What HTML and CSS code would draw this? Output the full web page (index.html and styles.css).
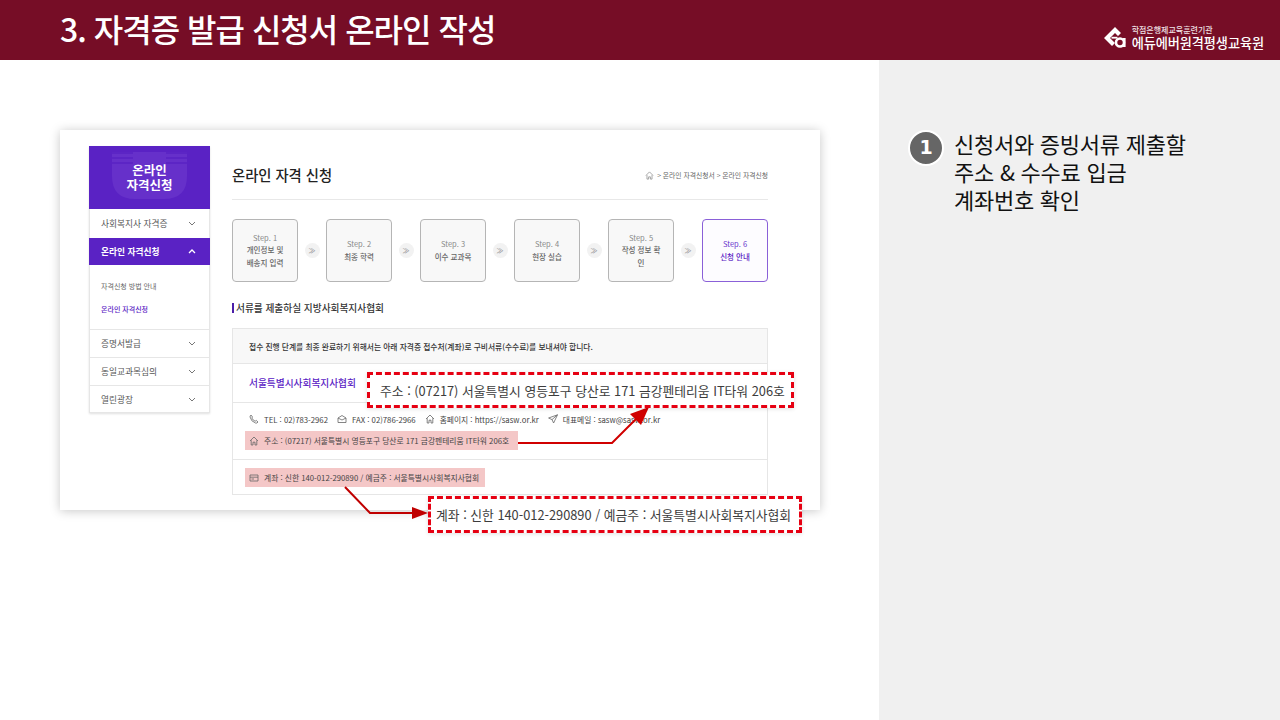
FILE: index.html
```html
<!DOCTYPE html>
<html lang="ko">
<head>
<meta charset="utf-8">
<title>자격증 발급 신청서 온라인 작성</title>
<link rel="stylesheet" href="styles.css">
</head>
<body>
<header class="topbar">
  <h1 class="slide-title">3. 자격증 발급 신청서 온라인 작성</h1>
  <div class="brand">
    <svg class="brand-mark" viewBox="0 0 24 24" width="24" height="24" aria-hidden="true">
      <path d="M12 1 L1 12 L9 20 L12 17 L7 12 L12 7 L15 10 L18 7 Z" fill="#fff"/>
      <rect x="8.5" y="10.8" width="6" height="1.8" fill="#fff"/>
      <circle cx="17" cy="16.5" r="4" fill="none" stroke="#fff" stroke-width="2.6"/>
      <rect x="20" y="12" width="2.6" height="9" fill="#fff"/>
    </svg>
    <div class="brand-text">
      <span class="brand-sub">학점은행제교육훈련기관</span>
      <span class="brand-name">에듀에버원격평생교육원</span>
    </div>
  </div>
</header>

<main class="stage">
  <section class="slide">
    <div class="shot">
      <nav class="side">
        <div class="side-hero">
          <svg class="hero-art" viewBox="0 0 121 62" width="121" height="62" aria-hidden="true">
            <path d="M23 6 H98 V30 Q98 53 75 53 H46 Q23 53 23 30 Z" fill="#6630ca"/>
            <path d="M23 7 H44 M23 12 H44 M23 17 H44 M77 7 H98 M77 12 H98 M77 17 H98" stroke="#5a22c4" stroke-width="1.6"/>
          </svg>
          <span class="hero-text">온라인<br>자격신청</span>
        </div>
        <div class="side-row side-first">사회복지사 자격증<svg class="chev" viewBox="0 0 8 5" width="8" height="5"><path d="M1 1 L4 4 L7 1" fill="none" stroke="#777" stroke-width="1"/></svg></div>
        <div class="side-row side-active">온라인 자격신청<svg class="chev" viewBox="0 0 8 5" width="8" height="5"><path d="M1 4 L4 1 L7 4" fill="none" stroke="#fff" stroke-width="1.3"/></svg></div>
        <div class="side-sub">
          <span>자격신청 방법 안내</span>
          <span class="side-sub-on">온라인 자격신청</span>
        </div>
        <div class="side-row side-line">증명서발급<svg class="chev" viewBox="0 0 8 5" width="8" height="5"><path d="M1 1 L4 4 L7 1" fill="none" stroke="#777" stroke-width="1"/></svg></div>
        <div class="side-row side-line">동일교과목심의<svg class="chev" viewBox="0 0 8 5" width="8" height="5"><path d="M1 1 L4 4 L7 1" fill="none" stroke="#777" stroke-width="1"/></svg></div>
        <div class="side-row side-line">열린광장<svg class="chev" viewBox="0 0 8 5" width="8" height="5"><path d="M1 1 L4 4 L7 1" fill="none" stroke="#777" stroke-width="1"/></svg></div>
      </nav>

      <div class="content">
        <div class="page-head">
          <h2 class="page-title">온라인 자격 신청</h2>
          <div class="crumbs">
            <svg viewBox="0 0 10 10" width="9" height="9" aria-hidden="true"><path d="M1 5 L5 1 L9 5 M2.2 4.5 V9 H4 V6.5 H6 V9 H7.8 V4.5" fill="none" stroke="#888" stroke-width=".8"/></svg>
            <span>&gt; 온라인 자격신청서 &gt; 온라인 자격신청</span>
          </div>
        </div>

        <ol class="steps">
          <li class="step"><b>Step. 1</b><span>개인정보 및<br>배송지 입력</span></li>
          <li class="step-gap"><i>≫</i></li>
          <li class="step"><b>Step. 2</b><span>최종 학력</span></li>
          <li class="step-gap"><i>≫</i></li>
          <li class="step"><b>Step. 3</b><span>이수 교과목</span></li>
          <li class="step-gap"><i>≫</i></li>
          <li class="step"><b>Step. 4</b><span>현장 실습</span></li>
          <li class="step-gap"><i>≫</i></li>
          <li class="step"><b>Step. 5</b><span>작성 정보 확<br>인</span></li>
          <li class="step-gap"><i>≫</i></li>
          <li class="step step-on"><b>Step. 6</b><span>신청 안내</span></li>
        </ol>

        <h3 class="sec-title">서류를 제출하실 지방사회복지사협회</h3>

        <div class="info">
          <p class="info-note">접수 진행 단계를 최종 완료하기 위해서는 아래 자격증 접수처(계좌)로 구비서류(수수료)를 보내셔야 합니다.</p>
          <div class="info-name">서울특별시사회복지사협회</div>
          <div class="info-contact">
            <div class="contact-line">
              <span class="ci">
                <svg viewBox="0 0 10 10" width="10" height="10"><path d="M2 1 L3.5 3 L2.8 4 Q4 6.5 6.2 7.2 L7.2 6.4 L9 8 Q8 9.5 6.5 9 Q2 7.5 1 3 Q1 1.6 2 1 Z" fill="none" stroke="#666" stroke-width=".8"/></svg>
                TEL : 02)783-2962</span>
              <span class="ci">
                <svg viewBox="0 0 10 10" width="10" height="10"><path d="M1 4 L5 1.5 L9 4 V8.5 H1 Z M1 4 L5 6 L9 4" fill="none" stroke="#666" stroke-width=".8"/></svg>
                FAX : 02)786-2966</span>
              <span class="ci">
                <svg viewBox="0 0 10 10" width="10" height="10"><path d="M1 5 L5 1 L9 5 M2.2 4.2 V9 H4 V6.2 H6 V9 H7.8 V4.2" fill="none" stroke="#666" stroke-width=".8"/></svg>
                홈페이지 : https://sasw.or.kr</span>
              <span class="ci">
                <svg viewBox="0 0 10 10" width="10" height="10"><path d="M9.5 .8 L.6 4 L4 5.6 L5.6 9 Z M4 5.6 L9.5 .8" fill="none" stroke="#666" stroke-width=".8"/></svg>
                대표메일 : sasw@sasw.or.kr</span>
            </div>
            <div class="mark mark-addr">
              <svg viewBox="0 0 10 10" width="10" height="10"><path d="M1 5 L5 1 L9 5 M2.2 4.2 V9 H4 V6.2 H6 V9 H7.8 V4.2" fill="none" stroke="#666" stroke-width=".8"/></svg>
              주소 : (07217) 서울특별시 영등포구 당산로 171 금강펜테리움 IT타워 206호
            </div>
          </div>
          <div class="info-bank">
            <div class="mark mark-bank">
              <svg viewBox="0 0 10 10" width="10" height="10"><path d="M1 2 H9 V8 H1 Z M1 4.2 H9 M2.5 6 H5" fill="none" stroke="#666" stroke-width=".8"/></svg>
              계좌 : 신한 140-012-290890 / 예금주 : 서울특별시사회복지사협회
            </div>
          </div>
        </div>
      </div>
    </div>

    <svg class="arrows" viewBox="0 0 879 660" width="879" height="660" aria-hidden="true">
      <path d="M518 383 H612 L640 355" fill="none" stroke="#d00000" stroke-width="2"/>
      <path d="M649 347 L630 354 L641 365 Z" fill="#d00000"/>
      <path d="M345 427 L370 453 H416" fill="none" stroke="#c00000" stroke-width="2"/>
      <path d="M428 453 L412 447 V459 Z" fill="#c00000"/>
    </svg>
    <div class="callout callout-addr">주소 : (07217) 서울특별시 영등포구 당산로 171 금강펜테리움 IT타워 206호</div>
    <div class="callout callout-bank">계좌 : 신한 140-012-290890 / 예금주 : 서울특별시사회복지사협회</div>
  </section>

  <aside class="notes">
    <span class="badge">1</span>
    <p class="note-text">신청서와 증빙서류 제출할<br>주소 &amp; 수수료 입금<br>계좌번호 확인</p>
  </aside>
</main>
</body>
</html>
```

FILE: styles.css
```css
* { box-sizing: border-box; }
html, body { margin: 0; padding: 0; }
body {
  width: 1280px;
  height: 720px;
  overflow: hidden;
  background: #fff;
  font-family: "Noto Sans CJK KR", "Noto Sans", sans-serif;
  color: #333;
}
h1, h2, h3, p, ol { margin: 0; padding: 0; }
ol { list-style: none; }

.topbar {
  height: 60px;
  background: #760d26;
  display: flex;
  align-items: center;
  justify-content: space-between;
  padding: 0 16px 0 60px;
}
.slide-title {
  font-size: 32px;
  font-weight: 500;
  color: #fff;
  letter-spacing: -1px;
  line-height: 56px;
  height: 60px;
}
.brand {
  display: flex;
  align-items: center;
  gap: 5px;
  padding-top: 15px;
  color: #fff;
}
.brand-mark { margin-left: -3px; }
.brand-text { display: flex; flex-direction: column; }
.brand-sub { font-size: 8px; line-height: 10px; font-weight: 500; color: #efe0e4; }
.brand-name { font-size: 13.2px; line-height: 15px; font-weight: 500; letter-spacing: -0.1px; }

.stage { display: flex; height: 660px; }
.slide { position: relative; width: 879px; padding: 70px 0 0 60px; }
.notes {
  width: 401px;
  background: #f0f0f0;
  display: flex;
  align-items: flex-start;
  gap: 10px;
  padding: 70px 0 0 29px;
}

.shot {
  width: 760px;
  height: 380px;
  background: #fff;
  box-shadow: 0 1px 10px rgba(0, 0, 0, .22);
  display: flex;
  padding: 16px 0 0 29px;
  gap: 22px;
  overflow: hidden;
}

.side {
  width: 121px;
  height: 267px;
  border: 1px solid #e6e6e6;
  border-top: 0;
  box-shadow: 0 1px 2px rgba(0, 0, 0, .12);
  font-size: 8.7px;
  color: #555;
  flex: none;
}
.side-hero {
  position: relative;
  height: 63px;
  margin: 0 -1px;
  background: #5a22c4;
  display: flex;
  align-items: center;
  justify-content: center;
}
.hero-art { position: absolute; left: 0; top: 0; }
.hero-text {
  position: relative;
  color: #fff;
  font-size: 12.5px;
  font-weight: 700;
  line-height: 15px;
  text-align: center;
  margin-top: -2px;
}
.side-row {
  height: 28px;
  display: flex;
  align-items: center;
  justify-content: space-between;
  padding: 0 13px 0 11px;
}
.side-first { height: 29px; }
.side-line { border-top: 1px solid #e6e6e6; }
.side-active {
  height: 27px;
  margin: 0 -1px;
  padding: 0 14px 0 12px;
  background: #5a22c4;
  color: #fff;
  font-weight: 700;
}
.side-sub {
  height: 64px;
  display: flex;
  flex-direction: column;
  gap: 13px;
  padding: 16px 11px 0;
  font-size: 7px;
  line-height: 10px;
  color: #666;
}
.side-sub-on { color: #5a22c4; font-weight: 500; }

.content { width: 536px; flex: none; }
.page-head {
  height: 54px;
  border-bottom: 1px solid #e8e8e8;
  display: flex;
  justify-content: space-between;
  align-items: center;
  padding-top: 5px;
}
.page-title { font-size: 14.3px; font-weight: 500; color: #222; line-height: 20px; }
.crumbs { display: flex; align-items: center; gap: 3px; font-size: 6.8px; color: #666; }

.steps { display: flex; margin-top: 19px; }
.step {
  width: 66px;
  height: 63px;
  border: 1px solid #b5b5b5;
  border-radius: 4px;
  background: #f8f8f8;
  display: flex;
  flex-direction: column;
  align-items: center;
  justify-content: center;
  text-align: center;
  font-size: 7.5px;
  line-height: 12.5px;
  color: #666;
  flex: none;
}
.step b { font-weight: 400; color: #888; }
.step span { font-weight: 500; }
.step-on { border-color: #8a60d8; background: #fdfcff; color: #5a22c4; }
.step-on b { color: #6a35cc; }
.step-gap {
  width: 28px;
  flex: none;
  display: flex;
  align-items: center;
  justify-content: center;
}
.step-gap i {
  width: 15px;
  height: 15px;
  border-radius: 50%;
  background: #f2f2f2;
  color: #888;
  font-style: normal;
  font-size: 7px;
  line-height: 15px;
  text-align: center;
}

.sec-title {
  margin-top: 21px;
  border-left: 2px solid #4b1fa8;
  padding-left: 2px;
  font-size: 9.7px;
  font-weight: 500;
  line-height: 10px;
  color: #333;
}

.info {
  margin-top: 15px;
  border: 1px solid #e6e6e6;
  height: 167px;
  font-size: 7.75px;
  color: #444;
}
.info-note {
  height: 35px;
  background: #f8f8f8;
  border-bottom: 1px solid #e6e6e6;
  padding-left: 16px;
  font-weight: 500;
  font-size: 7.75px;
  line-height: 35px;
  color: #333;
}
.info-name {
  height: 39px;
  border-bottom: 1px solid #e6e6e6;
  padding-left: 16px;
  color: #5a22c4;
  font-size: 9.7px;
  font-weight: 500;
  line-height: 38px;
}
.info-contact {
  height: 57px;
  border-bottom: 1px solid #e6e6e6;
  padding: 7px 0 0 16px;
}
.contact-line { display: flex; gap: 9px; height: 18px; align-items: center; }
.ci { display: inline-flex; align-items: center; gap: 5px; }
.mark {
  display: flex;
  align-items: center;
  gap: 5px;
  height: 19px;
  padding-left: 4px;
  margin-left: -4px;
  background: #f4c7c7;
  color: #444;
}
.mark-addr { width: 273px; margin-top: 3px; }
.info-bank { padding: 8px 0 0 16px; }
.mark-bank { width: 240px; }

.arrows { position: absolute; left: 0; top: 0; pointer-events: none; }
.callout {
  position: absolute;
  background: #fff;
  border: 3px dashed #e60012;
  box-shadow: 0 1px 4px rgba(0, 0, 0, .12);
  color: #3c3c3c;
  font-size: 12.8px;
  white-space: nowrap;
  display: flex;
  align-items: center;
}
.callout-addr { left: 367px; top: 312px; width: 427px; height: 36px; padding-left: 10px; }
.callout-bank { left: 428px; top: 436px; width: 374px; height: 37px; padding-left: 5px; }

.badge {
  width: 36px;
  height: 36px;
  border-radius: 50%;
  background: #666;
  border: 2px solid #fff;
  color: #fff;
  font-family: "DejaVu Sans", sans-serif;
  font-size: 19px;
  font-weight: 700;
  line-height: 31px;
  text-align: center;
  flex: none;
}
.note-text {
  font-size: 22px;
  line-height: 28px;
  color: #111;
  margin-top: -1px;
  letter-spacing: -0.25px;
}
```
